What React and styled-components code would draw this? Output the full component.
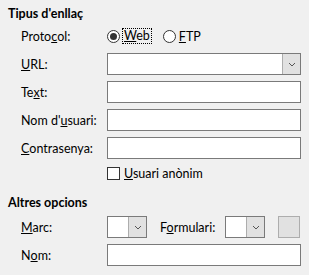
import styled, { createGlobalStyle } from "styled-components";

const GlobalStyle = createGlobalStyle`
    body {
        margin: 0;
        background: #f0f0f0;
        font-family: Lato, "Liberation Sans", sans-serif;
        font-size: 12.5px;
        color: #000;
    }
`;

const Chevron = () => (
    <svg width="8" height="5" viewBox="0 0 8 5">
        <path d="M1 1 L4 4 L7 1" fill="none" stroke="#555" strokeWidth="1" />
    </svg>
);

const App = () => {
    return (
        <>
            <GlobalStyle />
            <Page>
                <Heading>Tipus d'enllaç</Heading>
                <Grid $top={1} $rows="repeat(5, 22px) 17px">
                    <Label>Proto<u>c</u>ol:</Label>
                    <RadioRow>
                        <RadioItem>
                            <Radio $checked />
                            <Focus><u>W</u>eb</Focus>
                        </RadioItem>
                        <RadioItem>
                            <Radio />
                            <span><u>F</u>TP</span>
                        </RadioItem>
                    </RadioRow>

                    <Label><u>U</u>RL:</Label>
                    <Combo>
                        <ComboField />
                        <ComboButton><Chevron /></ComboButton>
                    </Combo>

                    <Label>Te<u>x</u>t:</Label>
                    <Input />

                    <Label>Nom d'<u>u</u>suari:</Label>
                    <Input />

                    <Label><u>C</u>ontrasenya:</Label>
                    <Input />

                    <span />
                    <CheckRow>
                        <Checkbox />
                        <span><u>U</u>suari anònim</span>
                    </CheckRow>
                </Grid>

                <Heading $top={11}>Altres opcions</Heading>
                <Grid $top={3} $rows="repeat(2, 22px)">
                    <Label><u>M</u>arc:</Label>
                    <InlineRow>
                        <Combo $width={40}>
                            <ComboField />
                            <ComboButton><Chevron /></ComboButton>
                        </Combo>
                        <InlineLabel>F<u>o</u>rmulari:</InlineLabel>
                        <Combo $width={40}>
                            <ComboField />
                            <ComboButton><Chevron /></ComboButton>
                        </Combo>
                        <SquareButton />
                    </InlineRow>

                    <Label>N<u>o</u>m:</Label>
                    <Input />
                </Grid>
            </Page>
        </>
    );
};

const Page = styled.div`
    width: 309px;
    height: 275px;
    box-sizing: border-box;
    padding: 4px 8px 0 8px;
    display: flex;
    flex-direction: column;
`;

const Heading = styled.div`
    font-weight: bold;
    line-height: 20px;
    margin-top: ${(p) => p.$top || 0}px;
`;

const Grid = styled.div`
    display: grid;
    grid-template-columns: 86px 1fr;
    grid-template-rows: ${(p) => p.$rows};
    row-gap: 6px;
    padding-left: 13px;
    margin-top: ${(p) => p.$top || 0}px;
`;

const Label = styled.label`
    display: flex;
    align-items: center;
    white-space: nowrap;
`;

const RadioRow = styled.div`
    display: flex;
    align-items: center;
    gap: 12px;
`;

const RadioItem = styled.div`
    display: flex;
    align-items: center;
    gap: 3px;
`;

const Radio = styled.span`
    width: 13px;
    height: 13px;
    box-sizing: border-box;
    border: 1px solid #333;
    border-radius: 50%;
    background: #fff;
    display: flex;
    align-items: center;
    justify-content: center;

    &::after {
        content: "";
        display: ${(p) => (p.$checked ? "block" : "none")};
        width: 7px;
        height: 7px;
        border-radius: 50%;
        background: #333;
    }
`;

const Focus = styled.span`
    outline: 1px dotted #000;
    outline-offset: 0;
    padding: 0 1px;
    line-height: 14px;
`;

const Input = styled.div`
    height: 22px;
    box-sizing: border-box;
    border: 1px solid #7a7a7a;
    background: #fff;
`;

const Combo = styled.div`
    display: flex;
    height: 22px;
    width: ${(p) => (p.$width ? `${p.$width}px` : "auto")};
    box-sizing: border-box;
    border: 1px solid #7a7a7a;
    background: #fff;
`;

const ComboField = styled.div`
    flex: 1;
`;

const ComboButton = styled.div`
    width: 17px;
    background: #e1e1e1;
    border-left: 1px solid #adadad;
    display: flex;
    align-items: center;
    justify-content: center;
`;

const CheckRow = styled.div`
    display: flex;
    align-items: center;
    gap: 4px;
`;

const Checkbox = styled.span`
    width: 13px;
    height: 13px;
    box-sizing: border-box;
    border: 1px solid #333;
    background: #fff;
`;

const InlineRow = styled.div`
    display: flex;
    align-items: center;
`;

const InlineLabel = styled.label`
    margin-left: 13px;
    width: 65px;
    white-space: nowrap;
`;

const SquareButton = styled.div`
    width: 22px;
    height: 22px;
    box-sizing: border-box;
    margin-left: 13px;
    border: 1px solid #adadad;
    background: #e1e1e1;
`;

export default App;
